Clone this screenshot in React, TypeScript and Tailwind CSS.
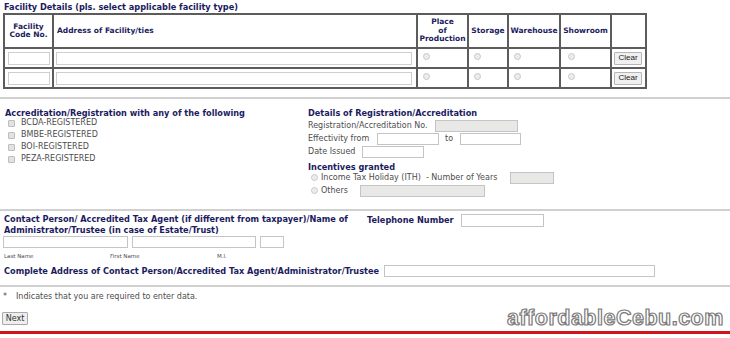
import React from "react";

const Radio = () => (
  <span className="inline-block w-[7px] h-[7px] rounded-full border border-[#c8c8c8] bg-[#ececec]" />
);

const Check = () => (
  <span className="inline-block w-[7px] h-[7px] rounded-[1px] border border-[#bdbdbd] bg-[#e2e2e2]" />
);

const Input = ({ w, gray = false, h = "h-[12px]" }: { w: string; gray?: boolean; h?: string }) => (
  <span
    className={`inline-block ${w} ${h} border border-[#c4c4c4] ${gray ? "bg-[#e8e8e6]" : "bg-white"}`}
  />
);

const ClearBtn = () => (
  <span className="inline-flex items-center justify-center w-[28px] h-[13px] border border-[#b5b5b5] bg-[#f0f0f0] rounded-[1px] text-[8px] text-[#222] font-['Liberation_Sans',Arial,sans-serif]">
    Clear
  </span>
);

function FacilityRow() {
  return (
    <tr className="h-[20px]">
      <td className="border-2 border-[#5c5c5c] px-[2px] text-center align-middle">
        <span className="inline-block w-[42px] h-[13px] border border-[#cfcfcf] bg-white align-middle" />
      </td>
      <td className="border-2 border-[#5c5c5c] px-[2px] align-middle">
        <span className="block w-[356px] h-[13px] border border-[#cfcfcf] bg-white" />
      </td>
      <td className="border-2 border-[#5c5c5c] pl-[5px] align-middle"><Radio /></td>
      <td className="border-2 border-[#5c5c5c] pl-[5px] align-middle"><Radio /></td>
      <td className="border-2 border-[#5c5c5c] pl-[5px] align-middle"><Radio /></td>
      <td className="border-2 border-[#5c5c5c] pl-[7px] align-middle"><Radio /></td>
      <td className="border-2 border-[#5c5c5c] pl-[2px] align-middle"><ClearBtn /></td>
    </tr>
  );
}

export default function App() {
  const heading = "text-[#1b1b5e] font-bold";
  return (
    <div className="relative w-[730px] h-[338px] overflow-hidden bg-white text-[#4d4d4d] font-['DejaVu_Sans',Verdana,sans-serif] text-[8px]">
      {/* Facility details */}
      <div className="px-[3px] pt-[2px]">
        <div className={`${heading} text-[8.2px] h-[11px] leading-[11px] pl-[1px]`}>
          Facility Details (pls. select applicable facility type)
        </div>
        <table className="border-collapse table-fixed w-[642px] border-2 border-[#5c5c5c]">
          <colgroup>
            <col className="w-[49px]" />
            <col className="w-[364px]" />
            <col className="w-[51px]" />
            <col className="w-[40px]" />
            <col className="w-[52px]" />
            <col className="w-[51px]" />
            <col className="w-[35px]" />
          </colgroup>
          <thead>
            <tr className={`h-[34px] ${heading} text-[7.5px] leading-[8.5px]`}>
              <th className="border-2 border-[#5c5c5c] text-center font-bold">Facility<br />Code No.</th>
              <th className="border-2 border-[#5c5c5c] text-left pl-[3px] font-bold">Address of Facility/ties</th>
              <th className="border-2 border-[#5c5c5c] text-center font-bold">Place<br />of<br />Production</th>
              <th className="border-2 border-[#5c5c5c] text-center font-bold">Storage</th>
              <th className="border-2 border-[#5c5c5c] text-center font-bold">Warehouse</th>
              <th className="border-2 border-[#5c5c5c] text-center font-bold">Showroom</th>
              <th className="border-2 border-[#5c5c5c]"></th>
            </tr>
          </thead>
          <tbody>
            <FacilityRow />
            <FacilityRow />
          </tbody>
        </table>
      </div>

      <div className="mt-[8px] border-t-2 border-[#d0d0d0]" />

      {/* Accreditation */}
      <div className="flex h-[108px]">
        <div className="w-[308px] pl-[5px] pt-[10px]">
          <div className={`${heading} h-[8px] leading-[8px] text-[8.2px]`}>
            Accreditation/Registration with any of the following
          </div>
          {["BCDA-REGISTERED", "BMBE-REGISTERED", "BOI-REGISTERED", "PEZA-REGISTERED"].map((t) => (
            <div key={t} className="h-[12px] flex items-center pl-[3px] gap-[6px]">
              <Check />
              <span>{t}</span>
            </div>
          ))}
        </div>
        <div className="flex-1 pt-[10px]">
          <div className={`${heading} h-[8px] leading-[8px] text-[8.2px]`}>
            Details of Registration/Accreditation
          </div>
          <div className="mt-[2px] h-[13px] flex items-center">
            <span className="w-[127px]">Registration/Accreditation No.</span>
            <Input w="w-[83px]" gray />
          </div>
          <div className="h-[13px] flex items-center">
            <span className="w-[69px]">Effectivity from</span>
            <Input w="w-[62px]" />
            <span className="ml-[6px] w-[15px]">to</span>
            <Input w="w-[61px]" />
          </div>
          <div className="h-[13px] flex items-center">
            <span className="w-[54px]">Date Issued</span>
            <Input w="w-[62px]" />
          </div>
          <div className={`${heading} mt-[5px] h-[8px] leading-[8px] text-[8.2px]`}>Incentives granted</div>
          <div className="h-[13px] flex items-center pl-[3px]">
            <Radio />
            <span className="ml-[3px] w-[189px] whitespace-pre">Income Tax Holiday (ITH)  - Number of Years</span>
            <Input w="w-[44px]" gray />
          </div>
          <div className="h-[13px] flex items-center pl-[3px]">
            <Radio />
            <span className="ml-[3px] w-[39px]">Others</span>
            <Input w="w-[125px]" gray />
          </div>
        </div>
      </div>

      <div className="mt-[2px] border-t-2 border-[#d0d0d0]" />

      {/* Contact person */}
      <div className="pl-[3px] pt-[3px] h-[74px]">
        <div className="flex">
          <div className={`${heading} w-[364px] pl-[1px] text-[8.2px] leading-[11px] whitespace-nowrap`}>
            Contact Person/ Accredited Tax Agent (if different from taxpayer)/Name of
            <br />
            Administrator/Trustee (in case of Estate/Trust)
          </div>
          <div className="flex items-start">
            <span className={`${heading} w-[94px] leading-[11px] mt-[1px] text-[8.2px]`}>Telephone Number</span>
            <Input w="w-[83px]" h="h-[13px]" />
          </div>
        </div>
        <div className="flex gap-[4px]">
          <Input w="w-[125px]" />
          <Input w="w-[124px]" />
          <Input w="w-[24px]" />
        </div>
        <div className="flex text-[5.5px] h-[16px] items-center pl-[1px]">
          <span className="w-[106px]">Last Name</span>
          <span className="w-[107px]">First Name</span>
          <span>M.I.</span>
        </div>
        <div className="flex items-center h-[12px] mt-[1px]">
          <span className={`${heading} w-[381px] pl-[1px] text-[8.2px] whitespace-nowrap`}>
            Complete Address of Contact Person/Accredited Tax Agent/Administrator/Trustee
          </span>
          <Input w="w-[271px]" />
        </div>
      </div>

      <div className="border-t-2 border-[#d0d0d0]" />

      <div className="flex items-center h-[17px] pl-[3px] mt-[1px]">
        <span className="w-[13px]">*</span>
        <span>Indicates that you are required to enter data.</span>
      </div>

      <div className="pl-[2px] mt-[7px]">
        <span className="inline-flex items-center justify-center w-[26px] h-[13px] border border-[#a9a9a9] bg-[#eeeeee] rounded-[1px] text-[8px] text-[#333]">
          Next
        </span>
      </div>

      <div className="mt-[6px] h-[3px] bg-[#d0141c]" />

      <div className="absolute left-[507px] top-[305px] text-[21.5px] font-bold leading-[26px] text-white font-['Liberation_Sans',Arial,sans-serif] [-webkit-text-stroke:1.2px_#7a7a7a] tracking-[0.5px]">
        affordableCebu.com
      </div>
    </div>
  );
}
